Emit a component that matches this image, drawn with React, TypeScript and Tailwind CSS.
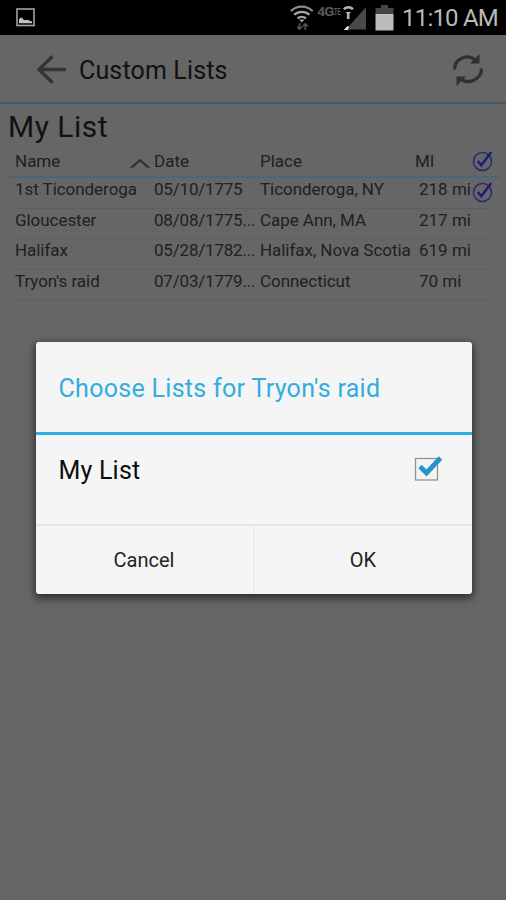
import type { ReactNode } from 'react'

interface Battle {
  name: string
  date: string
  place: string
  distance: string
  visited?: boolean
}

const battles: Battle[] = [
  { name: '1st Ticonderoga', date: '05/10/1775', place: 'Ticonderoga, NY', distance: '218 mi', visited: true },
  { name: 'Gloucester', date: '08/08/1775...', place: 'Cape Ann, MA', distance: '217 mi' },
  { name: 'Halifax', date: '05/28/1782...', place: 'Halifax, Nova Scotia', distance: '619 mi' },
  { name: "Tryon's raid", date: '07/03/1779...', place: 'Connecticut', distance: '70 mi' },
]

function VisitedIcon() {
  return (
    <svg width="22" height="22" viewBox="0 0 22 22" fill="none" className="shrink-0">
      <circle cx="10.5" cy="11.5" r="9" stroke="#262d6c" strokeWidth="1.5" />
      <path d="M5.8 11 9.3 15.2 19.2 2" stroke="#171f72" strokeWidth="2.4" />
    </svg>
  )
}

function StatusBar() {
  return (
    <header className="flex h-[35px] items-center bg-black pl-4">
      <svg width="20" height="20" viewBox="0 0 20 20" className="mt-px">
        <rect x="1" y="1" width="17" height="16.5" fill="none" stroke="#a3a3a3" strokeWidth="1.6" />
        <path d="M3 15.2V11.5l1.5-1.7h1.5l1.5 2 2 .5 2-.5 2 1 2.5.7v1.7Z" fill="#c4c4c4" />
      </svg>
      <div className="ml-auto flex items-center pr-[8px]">
        <svg width="24" height="28" viewBox="0 0 24 28" fill="none" stroke="#a8a8a8" strokeWidth="2.2">
          <path d="M.8 7.2C7 1.2 16.5 1.2 22.7 7.2" stroke="#8a8a8a" />
          <path d="M4.2 10.8c4.3-3.8 11-3.8 15.3 0" />
          <path d="M7.5 14.4c2.5-2.2 6-2.2 8.5 0" />
          <path d="m11.8 18.5-2.6-2.9h5.2Z" fill="#a8a8a8" stroke="none" />
          <path d="M9.5 19v6M7 22.5l2.5 2.8 2.5-2.8M15.3 26v-6M12.8 22.5l2.5-2.8 2.5 2.8" stroke="#505050" strokeWidth="1.7" />
        </svg>
        <div className="mb-[11px] ml-[3px] flex w-[27px] items-center whitespace-nowrap font-bold leading-none text-[#565656]">
          <span className="inline-block w-[17px] origin-left scale-x-[1.2] text-[12px] tracking-[-0.8px]">4G</span>
          <span className="inline-block origin-left scale-x-[0.7] pl-px text-[9px] tracking-[-0.8px]">LTE</span>
        </div>
        <svg width="24" height="26" viewBox="0 0 24 26" className="-ml-px">
          <path d="M23 2v22.5H3Z" fill="#494949" />
          <path d="M.8 4.2c2.6-2.6 6.6-2.6 9.2 0" fill="none" stroke="#b4b4b4" strokeWidth="2.5" />
          <path d="M2.5 7h5.5L5.3 10Z" fill="#b4b4b4" />
          <path d="M5.2 8v6" stroke="#b4b4b4" strokeWidth="2.6" />
          <path d="M1.5 24.500 5 21v3.500Z" fill="#e0e0e0" stroke="#e0e0e0" />
        </svg>
        <svg width="19" height="27" viewBox="0 0 19 27" className="ml-[8px]">
          <path d="M6 1h7v3h5.5v6H.5V4H6Z" fill="#464646" />
          <path d="M.5 10h18v16.5H.5Z" fill="#bcbcbc" />
        </svg>
        <span className="ml-[8px] w-[96px] whitespace-nowrap text-[24px] leading-none tracking-[-0.8px] text-[#b9b9b9]">
          11:10 AM
        </span>
      </div>
    </header>
  )
}

function AppBar() {
  return (
    <div className="flex h-[69px] items-center border-b-2 border-[#465c6e] pl-[36px] pr-[21px]">
      <svg width="31" height="30" viewBox="0 0 31 30" fill="none" stroke="#343434" strokeWidth="3.3">
        <path d="M30 15.5H3M16.5 2.3 3 15.5l13.5 13.2" />
      </svg>
      <h1 className="ml-[12px] mt-[4px] whitespace-nowrap text-[25px] tracking-[0.15px] text-[#111]">Custom Lists</h1>
      <svg width="34" height="34" viewBox="0 0 34 34" className="ml-auto mt-[2px]" fill="none" stroke="#303030" strokeWidth="3.2">
        <path d="M3.5 16.5C3.5 5.5 17-.5 25.5 8.2" />
        <path d="M30.5 15.5c0 11-13.5 17-22 9.8" />
        <path d="M28.5 1v9.5H19Z" fill="#303030" stroke="none" />
        <path d="M5.5 33v-9.5H15Z" fill="#303030" stroke="none" />
      </svg>
    </div>
  )
}

function BattleTable() {
  return (
    <section className="text-[17px] leading-none text-[#202020]">
      <h2 className="flex h-[42px] items-center pl-[8px] pt-[3px] text-[30px] tracking-[0.5px] text-[#121212]">My List</h2>
      <div className="ml-[8px] mr-[6px] flex h-[32px] items-center border-b-2 border-[#4b6679] pl-[7px]">
        <div className="flex w-[139px] items-center">
          <span>Name</span>
          <svg width="20" height="11" viewBox="0 0 20 11" className="ml-auto mr-[4px] mt-1" fill="none" stroke="#2e2e2e" strokeWidth="2">
            <path d="m1 10 9-8 9 8" />
          </svg>
        </div>
        <span className="w-[106px]">Date</span>
        <span className="w-[155px]">Place</span>
        <span className="w-[57px]">MI</span>
        <VisitedIcon />
      </div>
      {battles.map((battle) => (
        <div
          key={battle.name}
          className="ml-[15px] mr-[13px] flex h-[30.6px] items-center whitespace-nowrap border-b border-[#5f5f5f] pb-[6px]"
        >
          <span className="w-[139px] shrink-0 tracking-[-0.05px]">{battle.name}</span>
          <span className="w-[106px] shrink-0 tracking-[-0.2px]">{battle.date}</span>
          <span className="w-[159px] shrink-0 tracking-[-0.05px]">{battle.place}</span>
          <span className="w-[53px] shrink-0">{battle.distance}</span>
          {battle.visited && (
            <span className="mt-[5px] shrink-0">
              <VisitedIcon />
            </span>
          )}
        </div>
      ))}
    </section>
  )
}

function DialogButton({ children, className = '' }: { children: ReactNode; className?: string }) {
  return (
    <button type="button" className={`flex flex-1 items-center justify-center text-[20px] text-[#242424] ${className}`}>
      {children}
    </button>
  )
}

function ListDialog() {
  return (
    <div className="absolute inset-x-0 bottom-0 top-[35px] flex items-center justify-center pl-px">
      <div
        role="dialog"
        className="flex h-[252px] w-[436px] flex-col overflow-hidden rounded-[3px] bg-[#f5f5f5] shadow-[0_3px_8px_1px_rgba(0,0,0,0.6)]"
      >
        <h3 className="flex h-[93px] items-center whitespace-nowrap border-b-[3px] border-[#2fade0] pl-[23px] pt-[4px] text-[25px] tracking-[0.3px] text-[#33ace0]">
          Choose Lists for Tryon&apos;s raid
        </h3>
        <label className="flex h-[70px] items-center pl-[23px] pr-[28px] text-[25px] tracking-[0.2px] text-[#0c0c0c]">
          <span className="mt-[2px]">My List</span>
          <svg width="30" height="28" viewBox="0 0 30 28" className="mb-[4px] ml-auto">
            <rect x="1.5" y="4.5" width="22" height="21.5" fill="#f3f3f3" stroke="#929292" strokeWidth="1.3" />
            <path d="m6 12.5 6.5 6.5L26.5 4" fill="none" stroke="#2596c4" strokeWidth="4.8" />
          </svg>
        </label>
        <div className="mt-auto flex h-[70px] border-t-2 border-[#e6e6e6]">
          <DialogButton className="border-r-2 border-[#ededed]">Cancel</DialogButton>
          <DialogButton>OK</DialogButton>
        </div>
      </div>
    </div>
  )
}

export default function App() {
  return (
    <main className="relative h-[900px] w-[506px] overflow-hidden bg-[#666] font-[Roboto,sans-serif]">
      <StatusBar />
      <AppBar />
      <BattleTable />
      <ListDialog />
    </main>
  )
}
